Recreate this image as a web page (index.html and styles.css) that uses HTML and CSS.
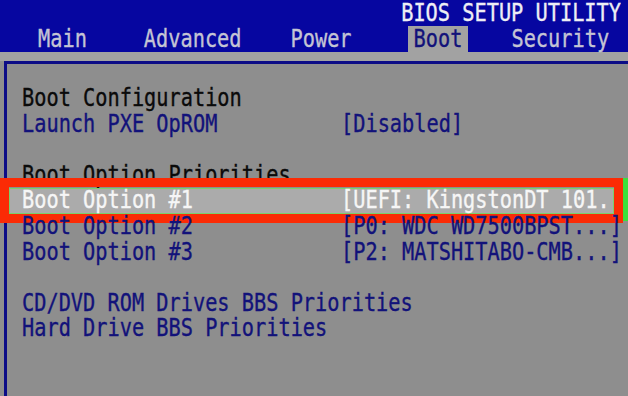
FILE: index.html
```html
<!DOCTYPE html>
<html lang="en">

<head>
  <meta charset="UTF-8">
  <meta name="viewport" content="width=device-width, initial-scale=1.0">
  <title>BIOS Setup Utility</title>
  <link rel="stylesheet" href="styles.css">
</head>

<body>
  <div class="header">
    <div class="title"><span class="txt">BIOS SETUP UTILITY</span></div>
    <div class="tabs">
      <div class="tab tab-main"><span class="txt">Main</span></div>
      <div class="tab tab-advanced"><span class="txt">Advanced</span></div>
      <div class="tab tab-power"><span class="txt">Power</span></div>
      <div class="tab tab-boot active"><span class="txt">Boot</span></div>
      <div class="tab tab-security"><span class="txt">Security</span></div>
    </div>
  </div>

  <div class="band"></div>

  <div class="frame">
    <div class="row heading"><span class="txt">Boot Configuration</span></div>
    <div class="row item">
      <span class="label txt">Launch PXE OpROM</span>
      <span class="value txt">[Disabled]</span>
    </div>
    <div class="row blank"></div>
    <div class="row heading"><span class="txt">Boot Option Priorities</span></div>
    <div class="row item selected">
      <span class="label txt">Boot Option #1</span>
      <span class="value txt">[UEFI: KingstonDT 101.</span>
    </div>
    <div class="row item">
      <span class="label txt">Boot Option #2</span>
      <span class="value txt">[P0: WDC WD7500BPST...]</span>
    </div>
    <div class="row item">
      <span class="label txt">Boot Option #3</span>
      <span class="value txt">[P2: MATSHITABO-CMB...]</span>
    </div>
    <div class="row blank"></div>
    <div class="row item"><span class="label txt">CD/DVD ROM Drives BBS Priorities</span></div>
    <div class="row item"><span class="label txt">Hard Drive BBS Priorities</span></div>
  </div>
</body>

</html>
```

FILE: styles.css
```css
:root {
  --bios-blue: #0606a0;
  --frame-blue: #0c0c86;
  --gray: #8e8e8e;
  --band-gray: #a2a2a2;
  --text-navy: #12127a;
  --tab-text: #c4c4d4;
  --mark-red: #fb2b05;
  --mark-green: #3be03b;
}

body {
  margin: 0;
  width: 628px;
  height: 396px;
  overflow: hidden;
  display: flex;
  flex-direction: column;
  background: var(--gray);
  font-family: 'DejaVu Sans Mono', 'Liberation Mono', monospace;
  font-size: 20.3px;
  color: var(--text-navy);
}

/* the bios font is tall and narrow */
.txt {
  display: inline-block;
  transform: scaleY(1.18);
  white-space: pre;
  -webkit-text-stroke: 0.3px currentColor;
}

.header {
  background: var(--bios-blue);
  height: 52px;
}

.title {
  height: 26px;
  line-height: 26px;
  text-align: right;
  padding-right: 7px;
  color: #eeeef4;
}

.tabs {
  display: flex;
  height: 26px;
  line-height: 26px;
  color: var(--tab-text);
}

.tab {
  padding: 0 6px;
}

.tab-main {
  margin-left: 32px;
}

.tab-advanced {
  margin-left: 45px;
}

.tab-power {
  margin-left: 37px;
}

.tab-boot {
  margin-left: 50px;
}

.tab-security {
  margin-left: 37px;
}

.tab.active {
  background: var(--band-gray);
  color: var(--text-navy);
}

.band {
  height: 9px;
  background: var(--band-gray);
}

.frame {
  flex: 1;
  margin-left: 4px;
  border-top: 3px solid var(--frame-blue);
  border-left: 3px solid var(--frame-blue);
  padding: 22px 0 0 15px;
}

.row {
  display: grid;
  grid-template-columns: 319px 1fr;
  height: 25.6px;
  line-height: 25.6px;
}

.heading {
  color: #0a0a0a;
}

.selected {
  position: relative;
  margin-left: -13px;
  margin-right: 14px;
  padding-left: 13px;
  background: #ababab;
  box-shadow: inset 0 0 0 1px #7ccf6c;
  color: #f6f6f6;
}

/* red annotation marker around the selected row */
.selected::before {
  content: '';
  position: absolute;
  left: -9px;
  right: -9px;
  top: -10px;
  bottom: -9px;
  border: 9px solid var(--mark-red);
  pointer-events: none;
}

.selected::after {
  content: '';
  position: absolute;
  right: -14px;
  width: 5px;
  top: -10px;
  bottom: -7px;
  background: var(--mark-green);
}
```
